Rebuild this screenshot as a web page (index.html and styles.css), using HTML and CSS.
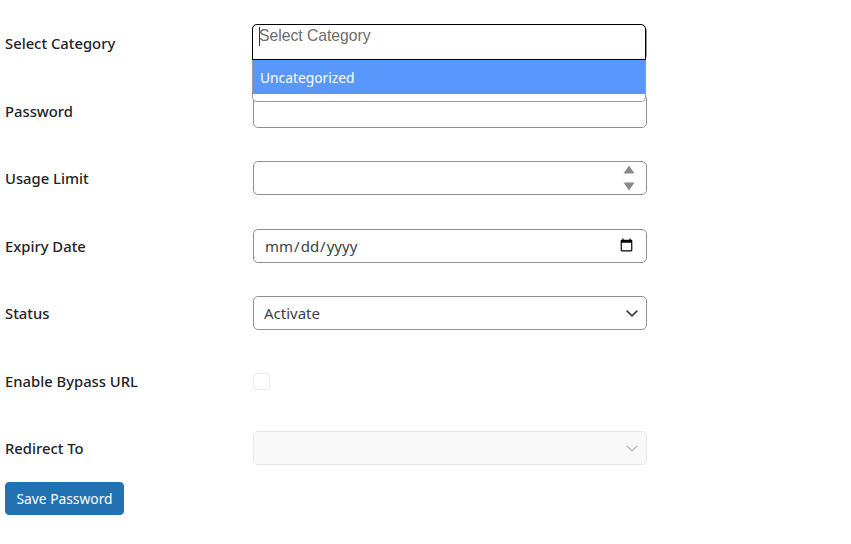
FILE: index.html
```html
<!DOCTYPE html>
<html lang="en">
<head>
    <meta charset="UTF-8">
    <meta name="viewport" content="width=device-width, initial-scale=1.0">
    <title>Add Password</title>
    <link rel="stylesheet" href="styles.css">
</head>
<body>
    <form class="password-form">
        <div class="form-row">
            <label class="form-label">Select Category</label>
            <div class="form-field category-field">
                <input type="text" class="form-input" aria-hidden="true">
                <div class="category-panel">
                    <div class="category-search">
                        <span class="search-caret"></span>
                        <input type="text" class="search-input" placeholder="Select Category">
                    </div>
                    <div class="category-option">Uncategorized</div>
                </div>
            </div>
        </div>
        <div class="form-row">
            <label class="form-label">Password</label>
            <div class="form-field"><input type="password" class="form-input"></div>
        </div>
        <div class="form-row">
            <label class="form-label">Usage Limit</label>
            <div class="form-field number-field">
                <input type="number" class="form-input">
                <div class="spinner">
                    <svg width="12" height="9" viewBox="0 0 12 9"><path d="M6 0.5 L11.5 8.5 H0.5 Z"/></svg>
                    <svg width="12" height="9" viewBox="0 0 12 9"><path d="M0.5 0.5 H11.5 L6 8.5 Z"/></svg>
                </div>
            </div>
        </div>
        <div class="form-row">
            <label class="form-label">Expiry Date</label>
            <div class="form-field"><input type="date" class="form-input"></div>
        </div>
        <div class="form-row">
            <label class="form-label">Status</label>
            <div class="form-field">
                <select class="form-input form-select">
                    <option>Activate</option>
                    <option>Deactivate</option>
                </select>
            </div>
        </div>
        <div class="form-row">
            <label class="form-label">Enable Bypass URL</label>
            <div class="form-field"><input type="checkbox" class="form-check"></div>
        </div>
        <div class="form-row">
            <label class="form-label">Redirect To</label>
            <div class="form-field">
                <select class="form-input form-select" disabled></select>
            </div>
        </div>
        <button type="button" class="save-button">Save Password</button>
    </form>
</body>
</html>
```

FILE: styles.css
```css
* {
    box-sizing: border-box;
}
body {
    margin: 0;
    padding: 9.5px 5px 0;
    background-color: #fff;
    color: #212529;
    font-family: "Noto Sans", "Open Sans", sans-serif;
    font-size: 15px;
}
.form-row {
    display: flex;
    align-items: center;
    height: 67.5px;
}
.form-label {
    width: 248px;
    font-weight: 550;
    font-size: 14.8px;
    color: #1d2327;
}
.form-field {
    width: 394px;
    position: relative;
}
.form-input {
    display: block;
    width: 100%;
    height: 34px;
    padding: 0 10px;
    border: 1px solid #8f8f8f;
    border-radius: 5px;
    background-color: #fff;
    color: #3c434a;
    font-family: inherit;
    font-size: 15px;
}
.form-select {
    appearance: none;
    background-image: url("data:image/svg+xml,%3csvg xmlns='http://www.w3.org/2000/svg' viewBox='0 0 16 16'%3e%3cpath fill='none' stroke='%23343a40' stroke-linecap='round' stroke-linejoin='round' stroke-width='2' d='m2 5 6 6 6-6'/%3e%3c/svg%3e");
    background-repeat: no-repeat;
    background-position: right 6px center;
    background-size: 16px 13px;
}
.form-select:disabled {
    border-color: #e8e8e8;
    background-color: #f8f8f8;
    opacity: 1;
    background-image: url("data:image/svg+xml,%3csvg xmlns='http://www.w3.org/2000/svg' viewBox='0 0 16 16'%3e%3cpath fill='none' stroke='%23c4c4c4' stroke-linecap='round' stroke-linejoin='round' stroke-width='2' d='m2 5 6 6 6-6'/%3e%3c/svg%3e");
}
.form-check {
    display: block;
    appearance: none;
    width: 17px;
    height: 17px;
    margin: 1px 0 0;
    border: 1px solid #e8e8e8;
    border-radius: 4px;
    background-color: #fff;
}

/* number field, arrows always showing */
.number-field input::-webkit-inner-spin-button {
    display: none;
}
.spinner {
    position: absolute;
    top: 4px;
    right: 12px;
    display: flex;
    flex-direction: column;
    gap: 8px;
}
.spinner svg {
    display: block;
    fill: #8a8a8a;
}

/* open category dropdown, sits over the password row */
.category-field {
    z-index: 2;
}
.category-panel {
    position: absolute;
    top: -2px;
    left: -1px;
    width: 394px;
    height: 78px;
    background-color: #fff;
    border: 1px solid #9a9a9a;
    border-top: 0;
    border-radius: 5px;
}
.category-search {
    position: relative;
    height: 36px;
    margin-left: -1px;
    margin-right: -1px;
    border: 1px solid #000;
    border-radius: 5px 5px 0 0;
    background-color: #fff;
}
.search-input {
    display: block;
    width: 100%;
    height: 20px;
    margin-top: 1px;
    padding: 0 0 0 6px;
    border: 0;
    outline: 0;
    background: transparent;
    font-family: "Liberation Sans", Arial, sans-serif;
    font-size: 15.7px;
}
.search-input::placeholder {
    color: #6c6c6c;
    opacity: 1;
}
.search-caret {
    position: absolute;
    top: 2px;
    left: 6px;
    width: 1px;
    height: 19px;
    background-color: #333;
}
.category-option {
    height: 34px;
    line-height: 36px;
    padding-left: 7px;
    background-color: #5897fb;
    color: #fff;
    font-size: 13.8px;
}
.save-button {
    display: block;
    width: 119px;
    height: 33px;
    padding: 0;
    border: 1px solid #2271b1;
    border-radius: 4px;
    background-color: #2271b1;
    color: #fff;
    font-family: inherit;
    font-size: 13.8px;
}
```
